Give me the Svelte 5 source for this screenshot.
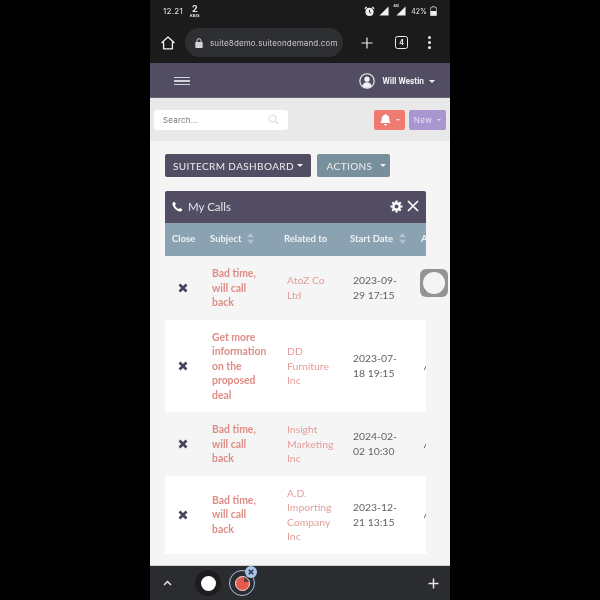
<script>
  const rows = [
    { subject: ['Bad time,', 'will call', 'back'], related: ['AtoZ Co', 'Ltd'], date: ['2023-09-', '29 17:15'], white: false },
    { subject: ['Get more', 'information', 'on the', 'proposed', 'deal'], related: ['DD', 'Furniture', 'Inc'], date: ['2023-07-', '18 19:15'], white: true },
    { subject: ['Bad time,', 'will call', 'back'], related: ['Insight', 'Marketing', 'Inc'], date: ['2024-02-', '02 10:30'], white: false },
    { subject: ['Bad time,', 'will call', 'back'], related: ['A.D.', 'Importing', 'Company', 'Inc'], date: ['2023-12-', '21 13:15'], white: true }
  ];
</script>

<div class="stage">
  <div class="phone">
    <div class="status">
      <div class="status-left">
        <span class="time">12.21</span>
        <span class="speed"><b>2</b><i>KB/s</i></span>
      </div>
      <div class="status-right">
        <svg width="11" height="11" viewBox="0 0 13 13"><circle cx="6.500" cy="7" r="4.800" fill="#eee"/><path d="M1 3.200 3.200 1M12 3.200 9.800 1" stroke="#eee" stroke-width="1.500"/><path d="M6.500 4.500V7.400L8.300 8.600" stroke="#1b1b1b" fill="none" stroke-width="1.100"/></svg>
        <svg class="sig1" width="10" height="10" viewBox="0 0 11 11"><path d="M0.500 10.500 10.500 0.500V10.500Z" fill="#f0f0f0"/></svg>
        <span class="lte">
          <i>4G</i>
          <svg width="10" height="10" viewBox="0 0 11 11"><path d="M0.500 10.500 10.500 0.500V10.500Z" fill="#f0f0f0"/></svg>
        </span>
        <span class="pct">42%</span>
        <svg width="7" height="10" viewBox="0 0 8 12"><path d="M2.500 0.500h3V2H7.200A.6.6 0 0 1 7.800 2.600V11a.6.6 0 0 1-.6.6H.8A.6.6 0 0 1 .2 11V2.600A.6.6 0 0 1 .8 2H2.500Z" fill="none" stroke="#eee" stroke-width=".8"/><rect x=".5" y="6" width="7" height="5.500" fill="#eee"/></svg>
      </div>
    </div>

    <div class="browser">
      <svg class="home" width="14" height="14" viewBox="0 0 14 14"><path d="M7 1 1 6.600H2.600V12.800H11.400V6.600H13Z" fill="none" stroke="#f0f0f0" stroke-width="1.300" stroke-linejoin="round"/></svg>
      <div class="url">
        <svg width="8" height="10" viewBox="0 0 8 10"><path d="M2 4V2.700a2 2 0 0 1 4 0V4" fill="none" stroke="#d4d4d6" stroke-width="1"/><rect x=".3" y="4" width="7.400" height="6" rx=".8" fill="#d4d4d6"/></svg>
        <span>suite8demo.suiteondemand.com</span>
      </div>
      <svg class="plus" width="12" height="12" viewBox="0 0 13 13"><path d="M6.500 .5V12.500M.5 6.500H12.500" stroke="#eee" stroke-width="1.300"/></svg>
      <span class="tabs">4</span>
      <span class="dots"><i></i><i></i><i></i></span>
    </div>

    <header class="top">
      <span class="burger"><i></i><i></i><i></i></span>
      <div class="user">
        <svg width="16" height="16" viewBox="0 0 16 16"><circle cx="8" cy="8" r="7.200" fill="#534d64" stroke="#f2f2f2" stroke-width="1.100"/><circle cx="8" cy="6.200" r="2.600" fill="#f2f2f2"/><path d="M3.300 13.200c.5-3 2.500-4 4.700-4s4.200 1 4.700 4A7 7 0 0 1 3.300 13.200Z" fill="#f2f2f2"/></svg>
        <span class="name">Will Westin</span>
        <span class="caret light"></span>
      </div>
    </header>

    <div class="tools">
      <div class="search">
        <span>Search...</span>
        <svg width="11" height="11" viewBox="0 0 11 11"><circle cx="4.500" cy="4.500" r="3.400" fill="none" stroke="#e3e3e3" stroke-width="1.400"/><path d="M7 7 10.200 10.200" stroke="#e3e3e3" stroke-width="1.800"/></svg>
      </div>
      <div class="tool-buttons">
        <span class="btn-bell">
          <svg width="11" height="12" viewBox="0 0 11 12"><path d="M5.500 0a1 1 0 0 1 1 1c2 .4 2.800 2 2.800 3.800 0 2.400.6 3.200 1.500 4.200H.2c.9-1 1.500-1.800 1.500-4.200C1.700 3 2.500 1.400 4.500 1a1 1 0 0 1 1-1ZM4 10h3a1.500 1.500 0 0 1-3 0Z" fill="#fff"/></svg>
          <span class="caret small"></span>
        </span>
        <span class="btn-new">New <span class="caret small"></span></span>
      </div>
    </div>

    <main class="content">
      <div class="dash-buttons">
        <span class="btn dash">SUITECRM DASHBOARD <span class="caret light"></span></span>
        <span class="btn actions">ACTIONS <span class="caret light"></span></span>
      </div>

      <section class="panel">
        <div class="panel-head">
          <svg width="11" height="11" viewBox="0 0 12 12"><path d="M2.600.7 4.300 3.300 3.200 4.600c.6 1.700 2.300 3.500 4.200 4.200L8.800 7.700 11.300 9.400c-.3 1.400-1.400 2.300-2.600 2.100C4.700 10.800 1.100 7.200.5 3.300.4 2.100 1.300 1 2.600.7Z" fill="#fff"/></svg>
          <span class="title">My Calls</span>
          <svg class="gear" width="13" height="13" viewBox="0 0 13 13"><circle cx="6.500" cy="6.500" r="3.200" fill="none" stroke="#fff" stroke-width="2.400"/><path d="M6.500.5V2.500M6.500 10.500V12.500M.5 6.500H2.500M10.500 6.500H12.500M2.300 2.300 3.700 3.700M9.300 9.300 10.700 10.700M2.300 10.700 3.700 9.300M9.300 3.700 10.700 2.300" stroke="#fff" stroke-width="2.200"/></svg>
          <svg width="12" height="12" viewBox="0 0 12 12"><path d="M1 1 11 11M11 1 1 11" stroke="#fff" stroke-width="1.700"/></svg>
        </div>
        <div class="table">
          <div class="grid thead">
            <span>Close</span>
            <span class="sort">Subject <svg width="7" height="11" viewBox="0 0 7 11"><path d="M3.500 0 7 4.300H0ZM3.500 11 0 6.700H7Z" fill="#b5c4ce"/></svg></span>
            <span>Related to</span>
            <span class="sort">Start Date <svg width="7" height="11" viewBox="0 0 7 11"><path d="M3.500 0 7 4.300H0ZM3.500 11 0 6.700H7Z" fill="#b5c4ce"/></svg></span>
            <span>Assigned</span>
          </div>
          {#each rows as row}
            <div class="grid row" class:white={row.white}>
              <span class="x"><svg width="10" height="10" viewBox="0 0 10 10"><path d="M1.500 1.500 8.500 8.500M8.500 1.500 1.500 8.500" stroke="#47435a" stroke-width="2.700"/></svg></span>
              <span class="subject">{#each row.subject as l}<span>{l}</span>{/each}</span>
              <span class="related">{#each row.related as l}<span>{l}</span>{/each}</span>
              <span class="date">{#each row.date as l}<span>{l}</span>{/each}</span>
              <span class="extra">A</span>
            </div>
          {/each}
        </div>
      </section>
      <span class="float"><i></i></span>
    </main>

    <footer class="bottom">
      <svg class="chev" width="9" height="6" viewBox="0 0 9 6"><path d="M1 5 4.500 1.500 8 5" fill="none" stroke="#e6e6e6" stroke-width="1.500"/></svg>
      <span class="ring-dark"><i></i></span>
      <span class="ring-tab">
        <span class="dot-red"><i></i></span>
        <span class="close-badge"><svg width="6" height="6" viewBox="0 0 6 6"><path d="M.7.7 5.300 5.300M5.300.7.7 5.300" stroke="#27304a" stroke-width="1.400"/></svg></span>
      </span>
      <svg class="add" width="11" height="11" viewBox="0 0 11 11"><path d="M5.500.5V10.500M.5 5.500H10.500" stroke="#e6e6e6" stroke-width="1.500"/></svg>
    </footer>
  </div>
</div>

<style>
  :global(body) { margin: 0; background: #000; }
  .stage { width: 600px; height: 600px; background: #000; display: flex; justify-content: center; overflow: hidden; }
  .phone { width: 300px; height: 600px; display: flex; flex-direction: column; background: #f5f5f5; font-family: Lato, sans-serif; filter: blur(0.45px); }

  .status { height: 28px; flex: none; background: #1b1b1b; display: flex; align-items: center; justify-content: space-between; padding: 0 13px 6px 13px; box-sizing: border-box; color: #e8e8e8; font-family: Inter, sans-serif; }
  .status-left { display: flex; align-items: center; gap: 7px; }
  .time { font-size: 8px; letter-spacing: .3px; }
  .speed { display: flex; flex-direction: column; align-items: center; line-height: 1; }
  .speed b { font-size: 9px; font-weight: 700; line-height: 8px; }
  .speed i { font-size: 4px; font-style: normal; font-weight: 700; line-height: 5px; }
  .status-right { display: flex; align-items: center; gap: 4px; }
  .sig1 { margin-right: -2px; }
  .lte { position: relative; display: flex; padding-left: 5px; }
  .lte i { position: absolute; left: 2px; top: -3px; font-size: 4px; font-style: normal; font-weight: 700; }
  .pct { font-size: 7px; margin-left: 1px; margin-right: -1px; }

  .browser { height: 35px; flex: none; background: #1b1b1b; display: flex; align-items: center; padding: 0 15px 6px 11px; box-sizing: border-box; }
  .url { width: 158px; height: 29px; margin-left: 10px; border-radius: 15px; background: #2e2f33; display: flex; align-items: center; gap: 7px; padding-left: 10px; box-sizing: border-box; color: #c9c9cc; font-family: Inter, sans-serif; font-size: 8px; letter-spacing: .14px; white-space: nowrap; overflow: hidden; }
  .plus { margin-left: 18px; }
  .tabs { width: 11px; height: 11px; margin-left: 22px; border: 1.300px solid #eee; border-radius: 2.500px; color: #eee; font-size: 7px; font-family: Inter, sans-serif; font-weight: 700; display: flex; align-items: center; justify-content: center; }
  .dots { margin-left: 20px; display: flex; flex-direction: column; gap: 2px; }
  .dots i { width: 3px; height: 3px; border-radius: 50%; background: #eee; }

  .top { height: 35px; flex: none; background: #534d64; display: flex; align-items: center; justify-content: space-between; padding: 2px 15px 0 24px; box-sizing: border-box; border-bottom: 1px solid #6b6775; }
  .burger { display: flex; flex-direction: column; gap: 2px; }
  .burger i { display: block; width: 16px; height: 1.500px; background: #d2d0d8; }
  .user { display: flex; align-items: center; color: #f0eff3; }
  .name { font-family: Roboto, sans-serif; font-weight: 700; font-size: 8.300px; margin-left: 8px; margin-right: 5px; }

  .caret { display: inline-block; width: 0; height: 0; border-left: 3px solid transparent; border-right: 3px solid transparent; border-top: 3px solid #d8d6de; vertical-align: middle; }
  .caret.light { border-top-color: #f0eff3; }
  .caret.small { border-left-width: 2.500px; border-right-width: 2.500px; border-top: 2.500px solid #f4d8d8; }

  .tools { height: 43px; flex: none; background: #e9e9e9; display: flex; align-items: center; justify-content: space-between; padding: 0 4px 0 4px; box-sizing: border-box; }
  .search { width: 134px; height: 20px; background: #fff; border-radius: 3px; display: flex; align-items: center; justify-content: space-between; padding: 0 9px 0 9px; box-sizing: border-box; color: #77777c; font-family: Inter, sans-serif; font-size: 8px; letter-spacing: .2px; }
  .tool-buttons { display: flex; gap: 4px; }
  .btn-bell { width: 31px; height: 20px; background: #ef7a72; border-radius: 2px; display: flex; align-items: center; justify-content: center; gap: 5px; }
  .btn-new { width: 37px; height: 20px; background: #a796cf; border-radius: 2px; display: flex; align-items: center; justify-content: center; gap: 5px; color: #e8e2f3; font-size: 8px; font-family: Inter, sans-serif; letter-spacing: .5px; }

  .content { flex: 1; min-height: 0; position: relative; padding: 12px 24px 0 15px; box-sizing: border-box; border-top: 1px solid #f2f2f2; }
  .dash-buttons { display: flex; gap: 6px; }
  .btn { height: 23px; border-radius: 2px; color: #eeeef1; font-size: 10px; display: flex; align-items: center; justify-content: center; gap: 3px; box-sizing: border-box; white-space: nowrap; }
  .dash { width: 146px; background: #534d64; letter-spacing: .38px; }
  .actions { width: 73px; background: #78909c; gap: 8px; padding-left: 6px; letter-spacing: .4px; }

  .panel { margin-top: 14px; width: 261px; }
  .panel-head { height: 32px; background: #534d64; border-radius: 2px 2px 0 0; display: flex; align-items: center; padding: 0 7px 2px; box-sizing: border-box; color: #e4e3e8; }
  .title { font-size: 11.500px; margin-left: 5px; flex: 1; }
  .gear { margin-right: 4px; }

  .table { width: 261px; overflow: hidden; }
  .grid { display: grid; grid-template-columns: 47px 75px 66px 68px 60px; width: 316px; }
  .thead { height: 33px; padding-bottom: 2px; box-sizing: border-box; background: #8aa2b2; align-items: center; color: #eef2f4; font-size: 9.500px; font-weight: 700; }
  .thead span:first-child { padding-left: 7px; }
  .thead span:nth-child(2) { margin-left: -2px; }
  .thead span:nth-child(3) { margin-left: -3px; }
  .thead span:nth-child(4) { margin-left: -3px; }
  .sort { display: flex; align-items: center; gap: 4px; }
  .sort svg { margin-left: 2px; }

  .row { padding: 10px 0; font-size: 10.400px; line-height: 14.500px; align-items: center; }
  .row.white { background: #fff; }
  .row span span { display: block; white-space: nowrap; }
  .x { display: flex; justify-content: center; width: 36px; }
  .subject { color: #de8d86; font-weight: 700; }
  .related { color: #e29e98; }
  .date { color: #5f5f66; }
  .extra { color: #5f5f66; font-style: italic; padding-left: 3px; }

  .float { position: absolute; left: 270px; top: 127px; width: 28px; height: 28px; border-radius: 6px; background: rgba(130,130,130,.85); display: flex; align-items: center; justify-content: center; }
  .float i { width: 22px; height: 22px; border-radius: 50%; background: rgba(252,252,252,.92); }

  .bottom { height: 35px; flex: none; background: #2b2c30; display: flex; align-items: center; padding: 0 11px 0 13px; box-sizing: border-box; border-top: 1px solid #d0d0d0; position: relative; }
  .ring-dark { width: 26px; height: 26px; margin-left: 23px; border-radius: 50%; background: #1d1d20; display: flex; align-items: center; justify-content: center; }
  .ring-dark i { width: 15px; height: 15px; border-radius: 50%; background: #fff; }
  .ring-tab { position: relative; width: 26px; height: 26px; margin-left: 8px; box-sizing: border-box; border: 1.500px solid #a9c4e6; border-radius: 50%; display: flex; align-items: center; justify-content: center; }
  .dot-red { position: relative; overflow: hidden; width: 15px; height: 15px; box-sizing: border-box; border: 1.500px solid #f3e3e1; border-radius: 50%; background: #e8574c; }
  .dot-red i { position: absolute; right: 0; top: 0; width: 5px; height: 5px; background: #54404a; }
  .close-badge { position: absolute; right: -3px; top: -5px; width: 12px; height: 12px; border-radius: 50%; background: #a9c4e6; display: flex; align-items: center; justify-content: center; }
  .add { margin-left: auto; }
</style>
